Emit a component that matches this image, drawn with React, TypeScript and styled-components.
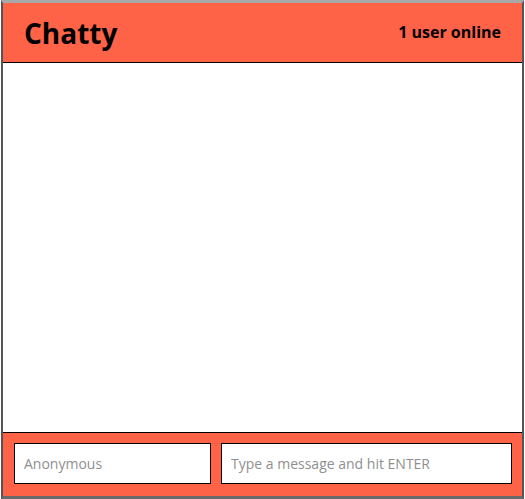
import React from "react";
import styled, { createGlobalStyle } from "styled-components";

const Global = createGlobalStyle`
  html, body { margin: 0; padding: 0; background: #ffffff; }
  body { font-family: "Open Sans", "Noto Sans", sans-serif; }
  * { box-sizing: border-box; }
`;

const Frame = styled.div`
  margin-left: 1px;
  width: 523px;
  height: 499px;
  border-top: 3px solid #a8a8a8;
  border-left: 2px solid #555555;
  border-right: 2px solid #555555;
  border-bottom: 3px solid #6a6a6a;
  display: flex;
  flex-direction: column;
  background: #ffffff;
`;

const Header = styled.header`
  height: 60px;
  flex: none;
  background: #ff6347;
  border-bottom: 1px solid #000;
  display: flex;
  align-items: center;
  justify-content: space-between;
  padding: 0 21px 0 21px;
`;

const Title = styled.h1`
  margin: 0;
  font-size: 28px;
  font-weight: 700;
  color: #000;
  line-height: 1;
`;

const Count = styled.span`
  font-size: 16px;
  font-weight: 700;
  color: #000;
  margin-top: -2px;
`;

const Messages = styled.main`
  flex: 1;
`;

const Footer = styled.footer`
  flex: none;
  height: 64px;
  background: #ff6347;
  border-top: 1px solid #000;
  display: flex;
  align-items: flex-start;
  gap: 10px;
  padding: 10px 10px 0 11px;
`;

const Input = styled.input<{ $grow?: boolean }>`
  height: 41px;
  border: 1px solid #000;
  background: #fff;
  font-family: "Open Sans", sans-serif;
  font-size: 14px;
  padding: 0 9px 1px;
  outline: none;
  flex: ${(p) => (p.$grow ? "1" : "none")};
  width: ${(p) => (p.$grow ? "auto" : "197px")};
  min-width: 0;
  &::placeholder { color: #8f8f8f; }
`;

export default function App() {
  return (
    <>
      <Global />
      <Frame>
        <Header>
          <Title>Chatty</Title>
          <Count>1 user online</Count>
        </Header>
        <Messages />
        <Footer>
          <Input placeholder="Anonymous" />
          <Input $grow placeholder="Type a message and hit ENTER" />
        </Footer>
      </Frame>
    </>
  );
}
